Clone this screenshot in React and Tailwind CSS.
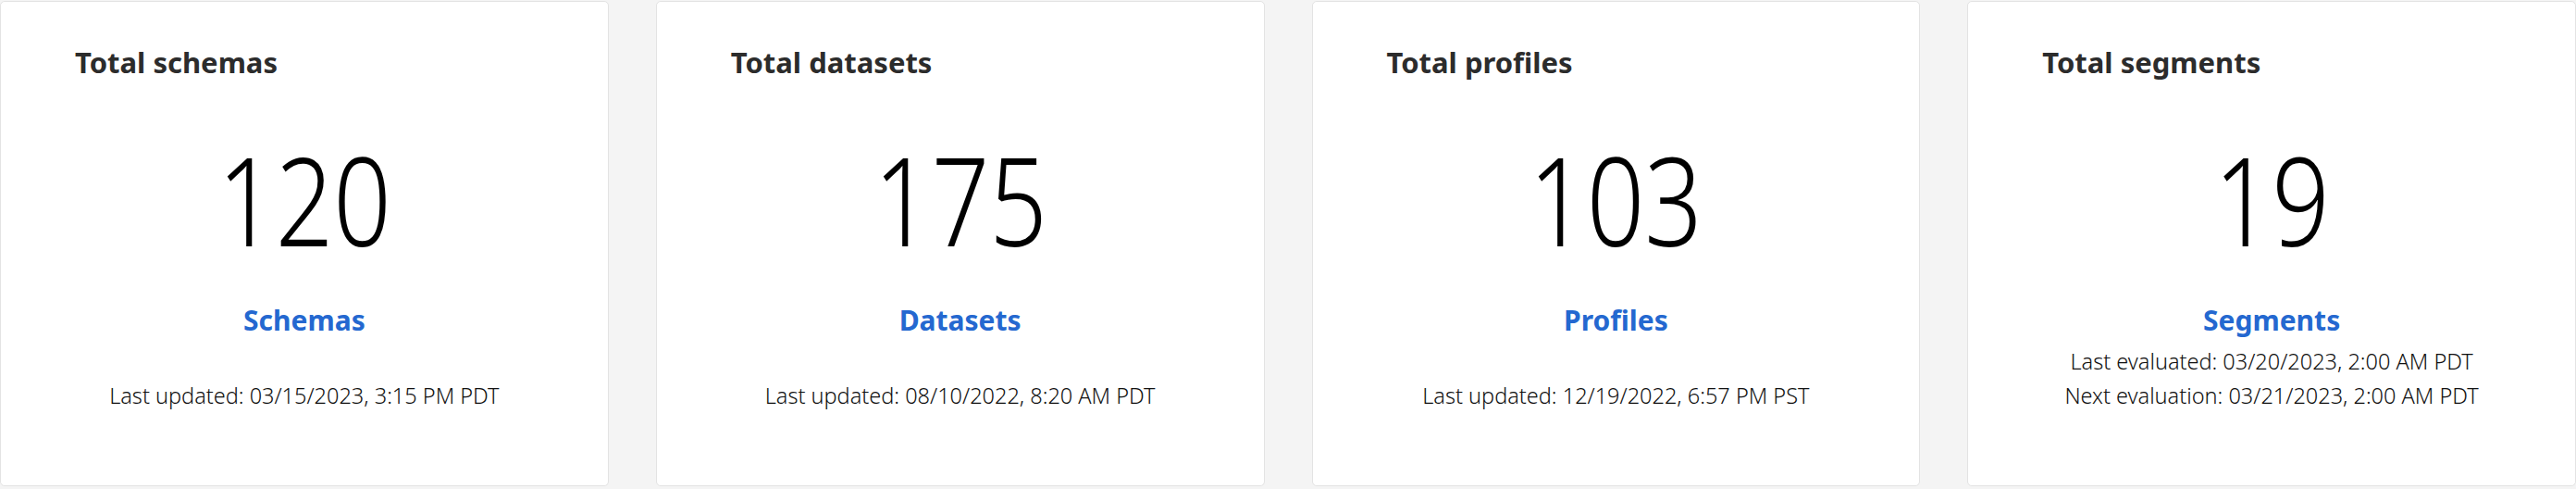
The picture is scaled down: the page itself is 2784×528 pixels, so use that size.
import React from "react";

const cards = [
  {
    title: "Total schemas",
    count: 120,
    link: "Schemas",
    lines: ["Last updated: 03/15/2023, 3:15 PM PDT"],
  },
  {
    title: "Total datasets",
    count: 175,
    link: "Datasets",
    lines: ["Last updated: 08/10/2022, 8:20 AM PDT"],
  },
  {
    title: "Total profiles",
    count: 103,
    link: "Profiles",
    lines: ["Last updated: 12/19/2022, 6:57 PM PST"],
  },
  {
    title: "Total segments",
    count: 19,
    link: "Segments",
    lines: [
      "Last evaluated: 03/20/2023, 2:00 AM PDT",
      "Next evaluation: 03/21/2023, 2:00 AM PDT",
    ],
  },
];

// Single metric card
const MetricCard = ({ title, count, link, lines }) => (
  <div className="h-[524px] rounded-[5px] border border-[#e3e3e3] bg-white flex flex-col">
    <h3 className="mt-[45px] pl-[80px] text-[31px] leading-[40px] font-bold text-[#2c2c2c]">
      {title}
    </h3>
    <div className="mt-[62px] text-center text-[132px] leading-[132px] font-light text-black">
      <span className="inline-block scale-x-[0.83]">{count}</span>
    </div>
    <a
      href="#"
      className="mt-[47px] text-center text-[30px] leading-[36px] font-bold text-[#2468d0]"
    >
      {link}
    </a>
    <div className="mt-[8px] h-[74px] flex flex-col justify-end text-center text-[23.5px] leading-[37px] font-light text-[#111]">
      {lines.map((line) => (
        <p key={line}>{line}</p>
      ))}
    </div>
  </div>
);

export default function App() {
  return (
    <div
      className="w-[2784px] h-[528px] bg-[#f4f4f4] pt-px grid grid-cols-4 gap-[51px] items-start"
      style={{ fontFamily: '"Noto Sans", "Open Sans", sans-serif' }}
    >
      {cards.map((card) => (
        <MetricCard key={card.title} {...card} />
      ))}
    </div>
  );
}
